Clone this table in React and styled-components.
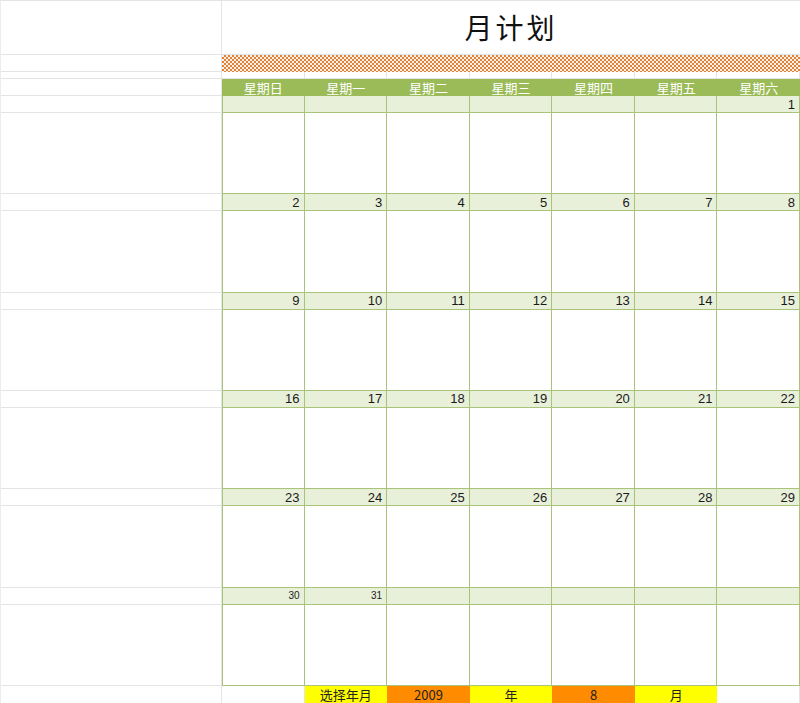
import React from "react";
import styled, { createGlobalStyle } from "styled-components";

const GlobalStyle = createGlobalStyle`
  html, body {
    margin: 0;
    padding: 0;
    background: #ffffff;
  }
  * {
    box-sizing: border-box;
  }
`;

const weekdays = ["星期日", "星期一", "星期二", "星期三", "星期四", "星期五", "星期六"];

// August 2009 starts on a Saturday
const weeks = [
  [null, null, null, null, null, null, 1],
  [2, 3, 4, 5, 6, 7, 8],
  [9, 10, 11, 12, 13, 14, 15],
  [16, 17, 18, 19, 20, 21, 22],
  [23, 24, 25, 26, 27, 28, 29],
  [30, 31, null, null, null, null, null],
];

const picker = [
  { text: "", tone: "plain" },
  { text: "选择年月", tone: "yellow" },
  { text: "2009", tone: "orange" },
  { text: "年", tone: "yellow" },
  { text: "8", tone: "orange" },
  { text: "月", tone: "yellow" },
  { text: "", tone: "plain" },
];

const App = () => {
  return (
    <>
      <GlobalStyle />
      <Sheet>
        <Cell />
        <TitleCell>月计划</TitleCell>

        <Cell />
        <PatternCell />

        <Cell />
        {weekdays.map((d) => (
          <Cell key={"sp" + d} />
        ))}

        <Cell />
        {weekdays.map((d) => (
          <DayHeader key={d}>{d}</DayHeader>
        ))}

        {weeks.map((week, w) => (
          <React.Fragment key={w}>
            <Cell />
            {week.map((n, i) => (
              <DateCell key={"d" + i} $first={i === 0} $small={w === 5}>
                {n}
              </DateCell>
            ))}
            <Cell />
            {week.map((n, i) => (
              <NoteCell key={"n" + i} $first={i === 0} />
            ))}
          </React.Fragment>
        ))}

        <Cell />
        {picker.map((p, i) => (
          <PickerCell key={i} $tone={p.tone}>
            {p.text}
          </PickerCell>
        ))}
      </Sheet>
    </>
  );
};

export default App;

const green = "#a9c47a";

const Sheet = styled.div`
  display: grid;
  width: 800px;
  height: 703px;
  overflow: hidden;
  grid-template-columns: 221px repeat(7, 1fr);
  grid-template-rows: 54px 17px 7px 17px repeat(6, 17px 81.33px) 18px;
  border-top: 1px solid #e4e4e4;
  border-left: 1px solid #ececec;
  font-family: "Liberation Sans", "Noto Sans CJK SC", sans-serif;
`;

const Cell = styled.div`
  border-right: 1px solid #e4e4e4;
  border-bottom: 1px solid #e4e4e4;
  background: #ffffff;
`;

const TitleCell = styled.div`
  grid-column: 2 / span 7;
  display: flex;
  align-items: center;
  justify-content: center;
  padding-bottom: 2px;
  border-bottom: 1px solid #e4e4e4;
  font-family: "Noto Sans CJK SC", sans-serif;
  font-size: 28px;
  font-weight: 400;
  letter-spacing: 3px;
  color: #111111;
`;

const PatternCell = styled.div`
  grid-column: 2 / span 7;
  background-color: #f0c29a;
  background-image: repeating-conic-gradient(#dc843c 0 25%, #fdf0e2 0 50%);
  background-size: 4px 4px;
`;

const DayHeader = styled.div`
  display: flex;
  align-items: center;
  justify-content: center;
  background: #9bbb59;
  color: #ffffff;
  font-family: "Noto Sans CJK SC", sans-serif;
  font-size: 13px;
  line-height: 15px;
  white-space: nowrap;
`;

const DateCell = styled.div`
  display: flex;
  align-items: center;
  justify-content: flex-end;
  padding-right: 4px;
  background: #e8f0da;
  border-right: 1px solid ${green};
  border-bottom: 1px solid ${green};
  border-left: ${(p) => (p.$first ? `1px solid ${green}` : "none")};
  color: #1a1a1a;
  font-size: ${(p) => (p.$small ? "10px" : "13px")};
  line-height: 1;
`;

const NoteCell = styled.div`
  background: #ffffff;
  border-right: 1px solid ${green};
  border-bottom: 1px solid ${green};
  border-left: ${(p) => (p.$first ? `1px solid ${green}` : "none")};
`;

const tones = {
  plain: "#ffffff",
  yellow: "#ffff00",
  orange: "#ff8c00",
};

const PickerCell = styled.div`
  display: flex;
  align-items: center;
  justify-content: center;
  background: ${(p) => tones[p.$tone]};
  border-right: ${(p) => (p.$tone === "plain" ? "1px solid #e4e4e4" : "none")};
  color: #222222;
  font-family: "Noto Sans CJK SC", sans-serif;
  font-size: 13px;
  line-height: 1;
`;
